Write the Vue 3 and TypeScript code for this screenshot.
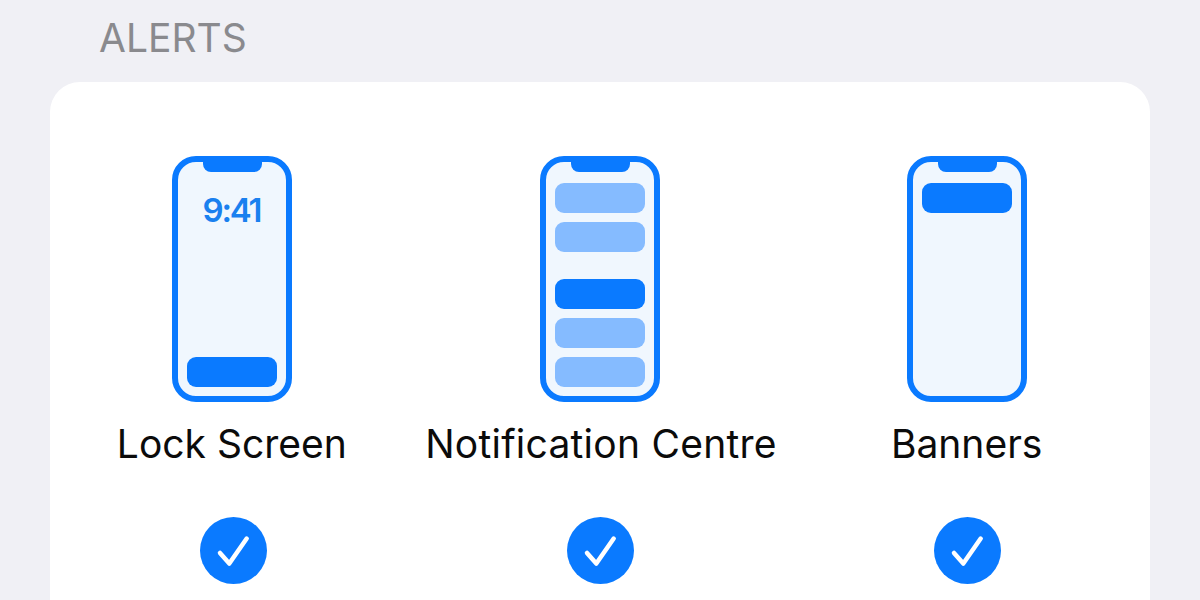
<template>
  <div class="page">
    <h2 class="section-title">ALERTS</h2>
    <section class="card">
      <div v-for="opt in options" :key="opt.label" class="option">
        <div class="phone">
          <span class="notch"></span>
          <div v-if="opt.time" class="time">{{ opt.time }}</div>
          <div v-for="(bar, i) in opt.bars" :key="i" class="bar" :class="[bar.kind, { gap: bar.gap, bottom: bar.bottom }]"></div>
        </div>
        <div class="label">{{ opt.label }}</div>
        <svg class="check" viewBox="0 0 67 67" aria-hidden="true">
          <circle cx="33.5" cy="33.5" r="33.5" fill="#0a7aff" />
          <path d="M20 36 L29.3 46.5 L46.7 21.5" fill="none" stroke="#fff" stroke-width="4.5" stroke-linecap="round" stroke-linejoin="round" />
        </svg>
      </div>
    </section>
  </div>
</template>

<script setup lang="ts">
interface Bar {
  kind: 'solid' | 'soft'
  gap?: boolean
  bottom?: boolean
}

interface Option {
  label: string
  time?: string
  bars: Bar[]
}

const options: Option[] = [
  { label: 'Lock Screen', time: '9:41', bars: [{ kind: 'solid', bottom: true }] },
  {
    label: 'Notification Centre',
    bars: [
      { kind: 'soft' },
      { kind: 'soft' },
      { kind: 'solid', gap: true },
      { kind: 'soft' },
      { kind: 'soft' }
    ]
  },
  { label: 'Banners', bars: [{ kind: 'solid' }] }
]
</script>

<style scoped>
.page {
  width: 1200px;
  height: 600px;
  overflow: hidden;
  background: #f0f0f5;
  font-family: Inter, "Liberation Sans", sans-serif;
  box-sizing: border-box;
  padding: 0 50px;
}

.section-title {
  margin: 0;
  padding: 16px 0 0 49px;
  height: 82px;
  box-sizing: border-box;
  font-size: 39px;
  line-height: 44px;
  font-weight: 400;
  color: #8a8a8e;
}

.card {
  display: grid;
  grid-template-columns: repeat(3, 1fr);
  height: 600px;
  padding-top: 74px;
  box-sizing: border-box;
  background: #fff;
  border-radius: 30px;
}

.option {
  display: flex;
  flex-direction: column;
  align-items: center;
}

.phone {
  position: relative;
  width: 120px;
  height: 246px;
  box-sizing: border-box;
  display: flex;
  flex-direction: column;
  gap: 9px;
  padding: 21px 9px 9px;
  border: 6px solid #0a7aff;
  border-radius: 24px;
  background: #f0f7fe;
}

.option:first-child .phone {
  margin-right: 2px;
}

.notch {
  position: absolute;
  top: -1px;
  left: 25px;
  width: 59px;
  height: 11px;
  background: #0a7aff;
  border-radius: 0 0 8px 8px;
}

.time {
  margin-top: 7px;
  padding-right: 2px;
  text-align: center;
  font-size: 33px;
  line-height: 40px;
  font-weight: 600;
  letter-spacing: -2.2px;
  color: #1a80ef;
}

.bar {
  flex: none;
  height: 30px;
  border-radius: 9px;
}

.bar.solid {
  background: #0a7aff;
}

.bar.soft {
  background: #85bbff;
}

.bar.gap {
  margin-top: 18px;
}

.bar.bottom {
  margin-top: auto;
}

.label {
  margin-top: 19px;
  font-size: 39px;
  line-height: 45px;
  color: #0b0b0b;
  white-space: nowrap;
}

.option:first-child .label {
  margin-right: 3px;
}

.option:nth-child(2) .label {
  margin-left: 2px;
  letter-spacing: 0.25px;
}

.check {
  display: block;
  width: 67px;
  height: 67px;
  margin-top: 51px;
}

.option + .option .check {
  margin-left: 2px;
}
</style>

<style>
html,
body {
  margin: 0;
  overflow: hidden;
}
</style>
